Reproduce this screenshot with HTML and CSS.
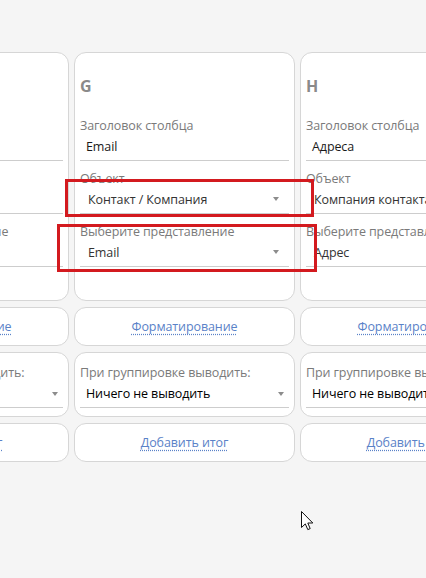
FILE: index.html
```html
<!DOCTYPE html>
<html lang="ru">
<head>
<meta charset="utf-8">
<title>Columns</title>
<link rel="stylesheet" href="styles.css">
</head>
<body>
<div class="board">
  <div class="col">
    <div class="card card-main">
      <div class="letter">F</div>
      <div class="field">
        <div class="label">Заголовок столбца</div>
        <div class="input">Телефон</div>
      </div>
      <div class="field">
        <div class="label">Объект</div>
        <div class="input select plain">Контакт / Компания</div>
      </div>
      <div class="field">
        <div class="label">Выберите представление</div>
        <div class="input select plain">Телефон</div>
      </div>
    </div>
    <div class="card card-link"><span class="link">Форматирование</span></div>
    <div class="card card-group">
      <div class="label">При группировке выводить:</div>
      <div class="input select group">Ничего не выводить</div>
    </div>
    <div class="card card-link"><span class="link">Добавить итог</span></div>
  </div>

  <div class="col">
    <div class="card card-main">
      <div class="letter">G</div>
      <div class="field">
        <div class="label">Заголовок столбца</div>
        <div class="input">Email</div>
      </div>
      <div class="field">
        <div class="label">Объект</div>
        <div class="input select">Контакт / Компания</div>
      </div>
      <div class="field">
        <div class="label">Выберите представление</div>
        <div class="input select">Email</div>
      </div>
    </div>
    <div class="card card-link"><span class="link">Форматирование</span></div>
    <div class="card card-group">
      <div class="label">При группировке выводить:</div>
      <div class="input select group">Ничего не выводить</div>
    </div>
    <div class="card card-link"><span class="link">Добавить итог</span></div>
  </div>

  <div class="col">
    <div class="card card-main">
      <div class="letter">H</div>
      <div class="field">
        <div class="label">Заголовок столбца</div>
        <div class="input">Адреса</div>
      </div>
      <div class="field">
        <div class="label">Объект</div>
        <div class="input select">Компания контакта</div>
      </div>
      <div class="field">
        <div class="label">Выберите представление</div>
        <div class="input select">Адрес</div>
      </div>
    </div>
    <div class="card card-link"><span class="link">Форматирование</span></div>
    <div class="card card-group">
      <div class="label">При группировке выводить:</div>
      <div class="input select group">Ничего не выводить</div>
    </div>
    <div class="card card-link"><span class="link">Добавить итог</span></div>
  </div>
</div>

<div class="mark mark-object"></div>
<div class="mark mark-view"></div>

<svg class="cursor" width="13" height="20" viewBox="0 0 13 20" aria-hidden="true">
  <path d="M0.5 0.5 L0.5 16.5 L4.3 12.9 L6.8 18.6 L9.2 17.6 L6.8 12 L11.8 12 Z" fill="#fff" stroke="#111" stroke-width="1" stroke-linejoin="miter"/>
</svg>
</body>
</html>
```

FILE: styles.css
```css
html, body {
  margin: 0;
  height: 100%;
  overflow: hidden;
  background: #f5f5f5;
}

body {
  position: relative;
  font-family: "Open Sans", "Noto Sans", "DejaVu Sans", sans-serif;
  font-size: 12.5px;
  letter-spacing: -0.1px;
  color: #1a1a1a;
}

.board {
  display: flex;
  gap: 5px;
  padding-top: 52px;
  margin-left: -152px;
}

.col {
  flex: 0 0 221px;
  width: 221px;
  display: flex;
  flex-direction: column;
  gap: 6px;
}

.card {
  box-sizing: border-box;
  background: #fff;
  border: 1px solid #d6d6d6;
  border-radius: 12px;
  padding: 0 5px;
}

.card-main {
  padding: 23px 5px 33px;
}

.letter {
  font-weight: 700;
  font-size: 16px;
  line-height: 20px;
  letter-spacing: 0;
  color: #8a8a8a;
  margin-bottom: 21px;
}

.field + .field {
  margin-top: 9px;
}

.label {
  line-height: 18px;
  color: #7a7a7a;
  white-space: nowrap;
}

.input {
  position: relative;
  box-sizing: border-box;
  height: 26px;
  padding: 3px 0 4px 6px;
  line-height: 18px;
  border-bottom: 1px solid #cdcdcd;
  white-space: nowrap;
  color: #1a1a1a;
}

.select {
  padding-left: 8px;
  color: #333;
}

.select::after {
  content: "";
  position: absolute;
  right: 10px;
  top: 9px;
  border-left: 3.5px solid transparent;
  border-right: 3.5px solid transparent;
  border-top: 4px solid #8c8c8c;
}

.select.plain::after {
  display: none;
}

.select.group {
  padding-left: 6px;
  color: #000;
}

.select.group::after {
  right: 5px;
  top: 10px;
}

.card-link {
  padding: 10px 5px 9px;
  line-height: 18px;
  text-align: center;
  white-space: nowrap;
}

.link {
  color: #5a82c8;
  text-decoration: underline dotted;
  text-underline-offset: 3px;
}

.card-group {
  padding: 11px 5px 8px;
}

.mark {
  position: absolute;
  box-sizing: border-box;
  border: 3px solid #d31a1f;
}

.mark-object {
  left: 65px;
  top: 179px;
  width: 249px;
  height: 38px;
}

.mark-view {
  left: 57px;
  top: 224px;
  width: 260px;
  height: 48px;
}

.cursor {
  position: absolute;
  left: 301px;
  top: 511px;
}
```
